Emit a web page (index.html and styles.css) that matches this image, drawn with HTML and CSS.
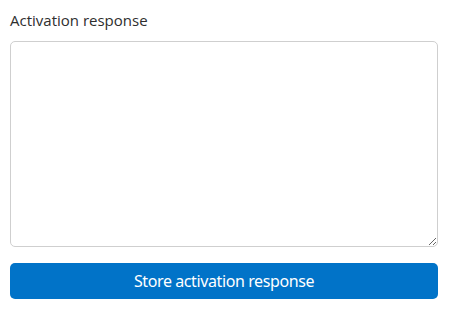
FILE: index.html
```html
<!DOCTYPE html>
<html>
<head>
<meta charset="utf-8">
<link rel="stylesheet" href="styles.css">
</head>
<body>
<form class="form">
  <label class="label" for="resp">Activation response</label>
  <textarea id="resp" class="field"></textarea>
  <button type="button" class="btn">Store activation response</button>
</form>
</body>
</html>
```
FILE: styles.css
```css
html, body {
  margin: 0;
  padding: 0;
  background: #fff;
}
.form {
  display: flex;
  flex-direction: column;
  padding: 9px 12px 0 10px;
  font-family: "Open Sans", sans-serif;
}
.label {
  font-size: 15px;
  color: #2e2e2e;
  line-height: 22px;
  margin-bottom: 10px;
}
.field {
  box-sizing: border-box;
  height: 206px;
  border: 1px solid #cfcfcf;
  border-radius: 5px;
  resize: vertical;
  margin: 0;
  padding: 6px;
  font: inherit;
}
.btn {
  margin-top: 16px;
  height: 36px;
  border: 0;
  border-radius: 5px;
  background: #0173c8;
  color: #fff;
  font-family: "Noto Sans", sans-serif;
  font-size: 16px;
  letter-spacing: -0.4px;
  padding: 0;
}
```
